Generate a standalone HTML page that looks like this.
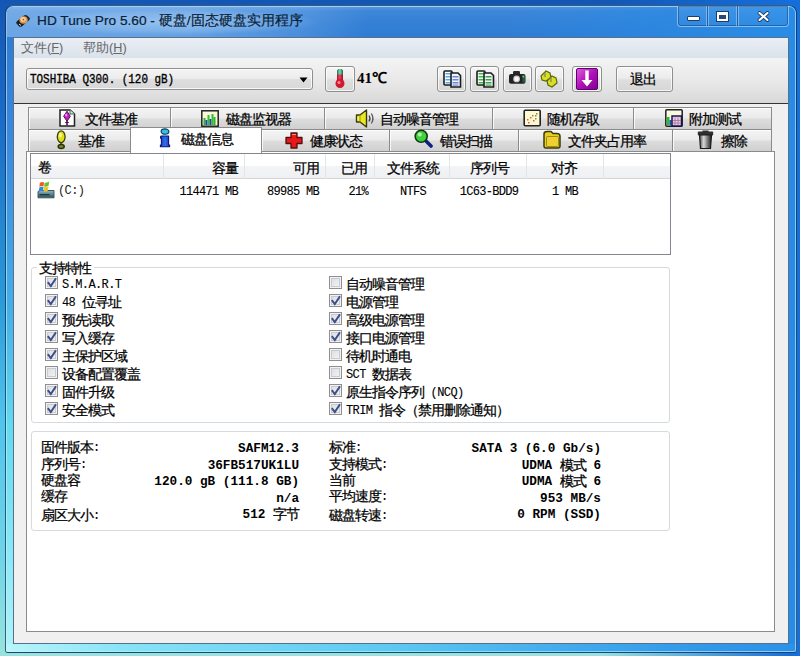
<!DOCTYPE html>
<html><head><meta charset="utf-8">
<style>
*{margin:0;padding:0;box-sizing:border-box}
html,body{width:800px;height:656px;overflow:hidden}
body{position:relative;font-family:"Liberation Sans",sans-serif;font-size:13px;color:#000;
background:linear-gradient(180deg,#1456b4 0px,#1a6cc8 120px,#2a9ad8 300px,#50c4ec 420px,#70d4e8 560px,#98e4dc 656px);}
.a{position:absolute}
.t{position:absolute;white-space:nowrap;line-height:1}
.c{position:absolute;white-space:nowrap;line-height:1;font-size:14px;letter-spacing:-1px;margin-top:1px;-webkit-text-stroke:.25px #000}
.cr{transform-origin:100% 0}
.m{position:absolute;white-space:nowrap;line-height:1;font-family:"Liberation Mono",monospace}
.btn{position:absolute;border:1px solid #8e8f8f;border-radius:3px;background:linear-gradient(180deg,#f6f6f6 0,#ececec 45%,#dedede 55%,#d6d6d6 100%);box-shadow:inset 0 0 0 1px rgba(255,255,255,.75)}
.tab{position:absolute;border:1px solid #8b8b8b;background:linear-gradient(180deg,#f4f4f4 0,#ebebeb 45%,#dcdcdc 55%,#d0d0d0 100%);box-shadow:inset 1px 1px 0 rgba(255,255,255,.8)}
.cb{position:absolute;width:13px;height:13px;border:1px solid #8f8f8f;background:linear-gradient(135deg,#d8dade 0,#f7f7f7 100%);box-shadow:inset 0 0 0 1px #f2f2f2,inset 0 0 0 2px #c6cad2}
.gb{position:absolute;border:1px solid #d5dadf;border-radius:3px;box-shadow:inset 1px 1px 0 #fff}
</style></head><body>
<div class="a" style="left:0;top:0;width:800px;height:656px;background:linear-gradient(90deg,rgba(0,0,0,0) 0,rgba(0,0,0,0) 600px,rgba(20,110,220,1) 790px)"></div>
<div class="a" style="left:5px;top:5px;width:792px;height:648px;border:1px solid rgba(8,36,72,.72);border-radius:8px 8px 3px 3px;background:linear-gradient(180deg,#5a9ae2 0,#3e86d8 5px,#3480d6 18px,#2e7cd4 31px,#3a8ae0 140px,#44aee8 300px,#62daf0 420px,#86e8f6 540px,#b0f4f8 648px);overflow:hidden"><div class="a" style="left:0;top:0;width:790px;height:646px;background:linear-gradient(90deg,rgba(60,150,230,0) 0,rgba(60,150,230,0) 500px,rgba(40,140,230,1) 770px)"></div><div class="a" style="left:0;top:638px;width:790px;height:8px;background:linear-gradient(90deg,#b8f6fa 0,#86e4f6 120px,#5ccaf2 380px,#40acee 560px,#3098ea 700px,#2c92e8 790px)"></div><div class="a" style="left:0;top:0;width:790px;height:646px;border:1px solid rgba(210,238,255,.6);border-radius:7px 7px 2px 2px"></div></div>
<div class="a" style="left:7px;top:7px;width:360px;height:30px;background:linear-gradient(90deg,rgba(180,215,250,.45) 0,rgba(180,215,250,.4) 180px,rgba(180,215,250,.2) 290px,rgba(180,215,250,0) 360px);border-radius:6px 0 0 0"></div><div class="a" style="left:20px;top:9px;width:300px;height:26px;background:radial-gradient(ellipse 150px 13px at 150px 13px,rgba(200,228,252,.45) 0,rgba(200,228,252,.2) 70%,rgba(200,228,252,0) 100%)"></div>
<svg class="a" style="left:15px;top:14px" width="16" height="14" viewBox="0 0 16 14">
 <path d="M1.5 9.5 Q0.5 8.5 2 7.2 L9 1.5 Q10.5 0.5 12 1.5 L14.5 3.8 Q15.5 5 14 6.3 L7 12.2 Q5.5 13.3 4 12.2 Z" fill="#1e1e1e"/>
 <ellipse cx="8.6" cy="6" rx="4.2" ry="3.8" fill="#d89850"/>
 <ellipse cx="8.2" cy="5.4" rx="2.6" ry="2.3" fill="#f4d0a0"/>
 <circle cx="8.4" cy="5.6" r="0.9" fill="#8a6030"/>
 <path d="M4 10 L6 11.5" stroke="#e8e0d0" stroke-width="1"/>
</svg>
<div class="t" style="left:37px;top:14px;font-size:13.7px;color:#0c1e36;-webkit-text-stroke:.2px #0c1e36">HD Tune Pro 5.60 - 硬盘/固态硬盘实用程序</div>
<div class="a" style="left:677px;top:6px;width:112px;height:21px;border:1px solid rgba(200,225,250,.55);border-top:none;border-radius:0 0 4px 4px;box-shadow:inset 0 0 0 1px rgba(20,50,100,.45);background:linear-gradient(180deg,rgba(120,180,240,.25),rgba(70,140,220,.2))"></div>
<div class="a" style="left:706px;top:6px;width:3px;height:20px;background:linear-gradient(90deg,rgba(200,225,250,.45) 0,rgba(200,225,250,.45) 33%,rgba(20,50,100,.5) 33%,rgba(20,50,100,.5) 66%,rgba(200,225,250,.45) 66%)"></div>
<div class="a" style="left:736px;top:6px;width:3px;height:20px;background:linear-gradient(90deg,rgba(200,225,250,.45) 0,rgba(200,225,250,.45) 33%,rgba(20,50,100,.5) 33%,rgba(20,50,100,.5) 66%,rgba(200,225,250,.45) 66%)"></div>
<div class="a" style="left:687px;top:16px;width:13px;height:5px;background:#fff;border:1px solid #203c68;border-radius:1px"></div>
<div class="a" style="left:717px;top:12px;width:11px;height:9px;border:2px solid #fff;border-top-width:3px;outline:1px solid #203c68;background:#28487a"></div>
<svg class="a" style="left:757px;top:11px" width="13" height="11" viewBox="0 0 13 11"><path d="M2.5 2 L10.5 9 M10.5 2 L2.5 9" stroke="#203c68" stroke-width="3.8" stroke-linecap="round"/><path d="M2.5 2 L10.5 9 M10.5 2 L2.5 9" stroke="#fff" stroke-width="2.1" stroke-linecap="round"/></svg>
<div class="a" style="left:13px;top:37px;width:776px;height:607px;border:1px solid #5b6f88;background:#f0f0f0"></div>
<div class="a" style="left:14px;top:38px;width:774px;height:20px;background:linear-gradient(180deg,#eaeff5 0,#e2e8f0 50%,#dae2eb 100%)"></div>
<div class="t" style="left:21px;top:42px;font-size:12.7px;color:#666">文件(<u>F</u>)</div>
<div class="t" style="left:83px;top:42px;font-size:12.7px;color:#666">帮助(<u>H</u>)</div>
<div class="a" style="left:14px;top:58px;width:774px;height:45px;background:linear-gradient(180deg,#f4f4f4 0,#e6e6e6 60%,#d8d8d8 100%)"></div>
<div class="a" style="left:14px;top:103px;width:774px;height:1px;background:#333"></div>
<div class="a" style="left:26px;top:68px;width:287px;height:22px;border:1px solid #8f8f8f;border-radius:3px;background:linear-gradient(180deg,#f4f4f4 0,#ececec 48%,#dedede 52%,#d8d8d8 100%);box-shadow:inset 0 0 0 1px rgba(255,255,255,.8)"></div>
<div class="m" style="left:30px;top:73px;font-size:13px;-webkit-text-stroke:.35px #000;transform:scaleX(0.84);transform-origin:0 0">TOSHIBA Q300. (120 gB)</div>
<svg class="a" style="left:299px;top:77px" width="9" height="6" viewBox="0 0 9 6"><path d="M0.5 0.5 H8.5 L4.5 5.5 Z" fill="#000"/></svg>
<div class="btn" style="left:325px;top:66px;width:30px;height:26px"></div>
<div class="btn" style="left:437px;top:66px;width:29px;height:26px"></div>
<div class="btn" style="left:470px;top:66px;width:29px;height:26px"></div>
<div class="btn" style="left:503px;top:66px;width:29px;height:26px"></div>
<div class="btn" style="left:535px;top:66px;width:29px;height:26px"></div>
<div class="btn" style="left:572px;top:66px;width:30px;height:26px"></div>
<div class="btn" style="left:616px;top:66px;width:57px;height:26px"></div>
<div class="t" style="left:357px;top:71px;font-size:15px;font-weight:bold;font-family:'Liberation Serif',serif">41℃</div>
<div class="c" style="left:630px;top:71px">退出</div>
<div class="tab" style="left:28px;top:107px;width:143px;height:23px"></div>
<div class="tab" style="left:170px;top:107px;width:155px;height:23px"></div>
<div class="tab" style="left:324px;top:107px;width:169px;height:23px"></div>
<div class="tab" style="left:492px;top:107px;width:142px;height:23px"></div>
<div class="tab" style="left:633px;top:107px;width:139px;height:23px"></div>
<div class="a" style="left:26px;top:151px;width:749px;height:481px;border:1px solid #8b8b8b;background:#fff"></div>
<div class="tab" style="left:28px;top:129px;width:103px;height:23px"></div>
<div class="tab" style="left:261px;top:129px;width:129px;height:23px"></div>
<div class="tab" style="left:389px;top:129px;width:130px;height:23px"></div>
<div class="tab" style="left:518px;top:129px;width:155px;height:23px"></div>
<div class="tab" style="left:672px;top:129px;width:100px;height:23px"></div>
<div class="a" style="left:130px;top:127px;width:132px;height:26px;border:1px solid #8b8b8b;border-bottom:none;background:#fff"></div>
<div class="c" style="left:85px;top:111px">文件基准</div>
<div class="c" style="left:226px;top:111px">磁盘监视器</div>
<div class="c" style="left:380px;top:111px">自动噪音管理</div>
<div class="c" style="left:547px;top:111px">随机存取</div>
<div class="c" style="left:689px;top:111px">附加测试</div>
<div class="c" style="left:78px;top:133px">基准</div>
<div class="c" style="left:181px;top:131px">磁盘信息</div>
<div class="c" style="left:310px;top:133px">健康状态</div>
<div class="c" style="left:440px;top:133px">错误扫描</div>
<div class="c" style="left:568px;top:133px">文件夹占用率</div>
<div class="c" style="left:721px;top:133px">擦除</div>
<div class="a" style="left:30px;top:153px;width:641px;height:102px;border:1px solid #828790;background:#fff"></div>
<div class="a" style="left:31px;top:154px;width:639px;height:25px;background:linear-gradient(180deg,#ffffff 0,#ffffff 50%,#f3f4f6 52%,#eef0f3 100%);border-bottom:1px solid #d5d5d5"></div>
<div class="a" style="left:163px;top:154px;width:1px;height:25px;background:#e3e5e8"></div>
<div class="a" style="left:244px;top:154px;width:1px;height:25px;background:#e3e5e8"></div>
<div class="a" style="left:325px;top:154px;width:1px;height:25px;background:#e3e5e8"></div>
<div class="a" style="left:374px;top:154px;width:1px;height:25px;background:#e3e5e8"></div>
<div class="a" style="left:449px;top:154px;width:1px;height:25px;background:#e3e5e8"></div>
<div class="a" style="left:526px;top:154px;width:1px;height:25px;background:#e3e5e8"></div>
<div class="a" style="left:603px;top:154px;width:1px;height:25px;background:#e3e5e8"></div>
<div class="c" style="left:38px;top:159px">卷</div>
<div class="c" style="right:562px;top:160px">容量</div>
<div class="c" style="right:481px;top:160px">可用</div>
<div class="c" style="right:433px;top:160px">已用</div>
<div class="c" style="left:413px;top:160px;transform:translateX(-50%)">文件系统</div>
<div class="c" style="left:489px;top:160px;transform:translateX(-50%)">序列号</div>
<div class="c" style="left:564px;top:160px;transform:translateX(-50%)">对齐</div>
<div class="m" style="left:58px;top:185px;font-size:12px;letter-spacing:-0.6px;color:#222">(C:)</div>
<div class="m" style="right:562px;top:186px;font-size:12px;letter-spacing:-0.7px;-webkit-text-stroke:.1px #000">114471&#160;MB</div>
<div class="m" style="right:481px;top:186px;font-size:12px;letter-spacing:-0.7px;-webkit-text-stroke:.1px #000">89985&#160;MB</div>
<div class="m" style="right:432px;top:186px;font-size:12px;letter-spacing:-0.7px;-webkit-text-stroke:.1px #000">21%</div>
<div class="m" style="left:413px;top:186px;font-size:12px;letter-spacing:-0.7px;transform:translateX(-50%);-webkit-text-stroke:.1px #000">NTFS</div>
<div class="m" style="left:489px;top:186px;font-size:12px;letter-spacing:-0.7px;transform:translateX(-50%);-webkit-text-stroke:.1px #000">1C63-BDD9</div>
<div class="m" style="left:565px;top:186px;font-size:12px;letter-spacing:-0.7px;transform:translateX(-50%);-webkit-text-stroke:.1px #000">1&#160;MB</div>
<div class="gb" style="left:31px;top:267px;width:639px;height:156px"></div>
<div class="a" style="left:37px;top:260px;width:57px;height:14px;background:#fff"></div>
<div class="c" style="left:39px;top:260px">支持特性</div>
<div class="cb" style="left:45px;top:276px"><svg class="a" style="left:0;top:0" width="11" height="11" viewBox="0 0 11 11"><path d="M1.8 5.2 L4.8 9 L10 1.3" fill="none" stroke="#3f4e88" stroke-width="2"/></svg></div>
<div class="c" style="left:62px;top:276px"><span style="font-family:'Liberation Mono',monospace;font-size:12px;letter-spacing:-0.6px;position:relative;top:-1px;-webkit-text-stroke:.1px #000">S.M.A.R.T</span></div>
<div class="cb" style="left:329px;top:276px"></div>
<div class="c" style="left:346px;top:276px">自动噪音管理</div>
<div class="cb" style="left:45px;top:294px"><svg class="a" style="left:0;top:0" width="11" height="11" viewBox="0 0 11 11"><path d="M1.8 5.2 L4.8 9 L10 1.3" fill="none" stroke="#3f4e88" stroke-width="2"/></svg></div>
<div class="c" style="left:62px;top:294px"><span style="font-family:'Liberation Mono',monospace;font-size:12px;letter-spacing:-0.6px;position:relative;top:-1px;-webkit-text-stroke:.1px #000">48&#160;</span>位寻址</div>
<div class="cb" style="left:329px;top:294px"><svg class="a" style="left:0;top:0" width="11" height="11" viewBox="0 0 11 11"><path d="M1.8 5.2 L4.8 9 L10 1.3" fill="none" stroke="#3f4e88" stroke-width="2"/></svg></div>
<div class="c" style="left:346px;top:294px">电源管理</div>
<div class="cb" style="left:45px;top:312px"><svg class="a" style="left:0;top:0" width="11" height="11" viewBox="0 0 11 11"><path d="M1.8 5.2 L4.8 9 L10 1.3" fill="none" stroke="#3f4e88" stroke-width="2"/></svg></div>
<div class="c" style="left:62px;top:312px">预先读取</div>
<div class="cb" style="left:329px;top:312px"><svg class="a" style="left:0;top:0" width="11" height="11" viewBox="0 0 11 11"><path d="M1.8 5.2 L4.8 9 L10 1.3" fill="none" stroke="#3f4e88" stroke-width="2"/></svg></div>
<div class="c" style="left:346px;top:312px">高级电源管理</div>
<div class="cb" style="left:45px;top:330px"><svg class="a" style="left:0;top:0" width="11" height="11" viewBox="0 0 11 11"><path d="M1.8 5.2 L4.8 9 L10 1.3" fill="none" stroke="#3f4e88" stroke-width="2"/></svg></div>
<div class="c" style="left:62px;top:330px">写入缓存</div>
<div class="cb" style="left:329px;top:330px"><svg class="a" style="left:0;top:0" width="11" height="11" viewBox="0 0 11 11"><path d="M1.8 5.2 L4.8 9 L10 1.3" fill="none" stroke="#3f4e88" stroke-width="2"/></svg></div>
<div class="c" style="left:346px;top:330px">接口电源管理</div>
<div class="cb" style="left:45px;top:348px"><svg class="a" style="left:0;top:0" width="11" height="11" viewBox="0 0 11 11"><path d="M1.8 5.2 L4.8 9 L10 1.3" fill="none" stroke="#3f4e88" stroke-width="2"/></svg></div>
<div class="c" style="left:62px;top:348px">主保护区域</div>
<div class="cb" style="left:329px;top:348px"></div>
<div class="c" style="left:346px;top:348px">待机时通电</div>
<div class="cb" style="left:45px;top:366px"></div>
<div class="c" style="left:62px;top:366px">设备配置覆盖</div>
<div class="cb" style="left:329px;top:366px"></div>
<div class="c" style="left:346px;top:366px"><span style="font-family:'Liberation Mono',monospace;font-size:12px;letter-spacing:-0.6px;position:relative;top:-1px;-webkit-text-stroke:.1px #000">SCT&#160;</span>数据表</div>
<div class="cb" style="left:45px;top:384px"><svg class="a" style="left:0;top:0" width="11" height="11" viewBox="0 0 11 11"><path d="M1.8 5.2 L4.8 9 L10 1.3" fill="none" stroke="#3f4e88" stroke-width="2"/></svg></div>
<div class="c" style="left:62px;top:384px">固件升级</div>
<div class="cb" style="left:329px;top:384px"><svg class="a" style="left:0;top:0" width="11" height="11" viewBox="0 0 11 11"><path d="M1.8 5.2 L4.8 9 L10 1.3" fill="none" stroke="#3f4e88" stroke-width="2"/></svg></div>
<div class="c" style="left:346px;top:384px">原生指令序列<span style="font-family:'Liberation Mono',monospace;font-size:12px;letter-spacing:-0.6px;position:relative;top:-1px;-webkit-text-stroke:.1px #000">&#160;(NCQ)</span></div>
<div class="cb" style="left:45px;top:402px"><svg class="a" style="left:0;top:0" width="11" height="11" viewBox="0 0 11 11"><path d="M1.8 5.2 L4.8 9 L10 1.3" fill="none" stroke="#3f4e88" stroke-width="2"/></svg></div>
<div class="c" style="left:62px;top:402px">安全模式</div>
<div class="cb" style="left:329px;top:402px"><svg class="a" style="left:0;top:0" width="11" height="11" viewBox="0 0 11 11"><path d="M1.8 5.2 L4.8 9 L10 1.3" fill="none" stroke="#3f4e88" stroke-width="2"/></svg></div>
<div class="c" style="left:346px;top:402px"><span style="font-family:'Liberation Mono',monospace;font-size:12px;letter-spacing:-0.6px;position:relative;top:-1px;-webkit-text-stroke:.1px #000">TRIM&#160;</span>指令（禁用删除通知）</div>
<div class="gb" style="left:31px;top:431px;width:639px;height:100px"></div>
<div class="c" style="left:41px;top:439px">固件版本<span style="font-family:'Liberation Mono',monospace;font-size:12px;letter-spacing:-0.6px;position:relative;top:-1px;-webkit-text-stroke:.1px #000">:</span></div>
<div class="c" style="left:41px;top:456px">序列号<span style="font-family:'Liberation Mono',monospace;font-size:12px;letter-spacing:-0.6px;position:relative;top:-1px;-webkit-text-stroke:.1px #000">:</span></div>
<div class="c" style="left:41px;top:472px">硬盘容</div>
<div class="c" style="left:41px;top:488px">缓存</div>
<div class="c" style="left:41px;top:507px">扇区大小<span style="font-family:'Liberation Mono',monospace;font-size:12px;letter-spacing:-0.6px;position:relative;top:-1px;-webkit-text-stroke:.1px #000">:</span></div>
<div class="c" style="left:329px;top:439px">标准<span style="font-family:'Liberation Mono',monospace;font-size:12px;letter-spacing:-0.6px;position:relative;top:-1px;-webkit-text-stroke:.1px #000">:</span></div>
<div class="c" style="left:329px;top:456px">支持模式<span style="font-family:'Liberation Mono',monospace;font-size:12px;letter-spacing:-0.6px;position:relative;top:-1px;-webkit-text-stroke:.1px #000">:</span></div>
<div class="c" style="left:329px;top:472px">当前</div>
<div class="c" style="left:329px;top:488px">平均速度<span style="font-family:'Liberation Mono',monospace;font-size:12px;letter-spacing:-0.6px;position:relative;top:-1px;-webkit-text-stroke:.1px #000">:</span></div>
<div class="c" style="left:329px;top:507px">磁盘转速<span style="font-family:'Liberation Mono',monospace;font-size:12px;letter-spacing:-0.6px;position:relative;top:-1px;-webkit-text-stroke:.1px #000">:</span></div>
<div class="c" style="right:501px;top:440px;-webkit-text-stroke:.3px #000"><span style="font-family:'Liberation Mono',monospace;font-size:12.7px;letter-spacing:0px;font-weight:bold;position:relative;top:-1px;-webkit-text-stroke:0px #000">SAFM12.3</span></div>
<div class="c" style="right:501px;top:457px;-webkit-text-stroke:.3px #000"><span style="font-family:'Liberation Mono',monospace;font-size:12.7px;letter-spacing:0px;font-weight:bold;position:relative;top:-1px;-webkit-text-stroke:0px #000">36FB517UK1LU</span></div>
<div class="c" style="right:501px;top:473px;-webkit-text-stroke:.3px #000"><span style="font-family:'Liberation Mono',monospace;font-size:12.7px;letter-spacing:0px;font-weight:bold;position:relative;top:-1px;-webkit-text-stroke:0px #000">120.0&#160;gB&#160;(111.8&#160;GB)</span></div>
<div class="c" style="right:501px;top:490px;-webkit-text-stroke:.3px #000"><span style="font-family:'Liberation Mono',monospace;font-size:12.7px;letter-spacing:0px;font-weight:bold;position:relative;top:-1px;-webkit-text-stroke:0px #000">n/a</span></div>
<div class="c" style="right:501px;top:506px;-webkit-text-stroke:.3px #000"><span style="font-family:'Liberation Mono',monospace;font-size:12.7px;letter-spacing:0px;font-weight:bold;position:relative;top:-1px;-webkit-text-stroke:0px #000">512&#160;</span>字节</div>
<div class="c" style="right:199px;top:440px;-webkit-text-stroke:.3px #000"><span style="font-family:'Liberation Mono',monospace;font-size:12.7px;letter-spacing:0px;font-weight:bold;position:relative;top:-1px;-webkit-text-stroke:0px #000">SATA&#160;3&#160;(6.0&#160;Gb/s)</span></div>
<div class="c" style="right:199px;top:457px;-webkit-text-stroke:.3px #000"><span style="font-family:'Liberation Mono',monospace;font-size:12.7px;letter-spacing:0px;font-weight:bold;position:relative;top:-1px;-webkit-text-stroke:0px #000">UDMA&#160;</span>模式<span style="font-family:'Liberation Mono',monospace;font-size:12.7px;letter-spacing:0px;font-weight:bold;position:relative;top:-1px;-webkit-text-stroke:0px #000">&#160;6</span></div>
<div class="c" style="right:199px;top:473px;-webkit-text-stroke:.3px #000"><span style="font-family:'Liberation Mono',monospace;font-size:12.7px;letter-spacing:0px;font-weight:bold;position:relative;top:-1px;-webkit-text-stroke:0px #000">UDMA&#160;</span>模式<span style="font-family:'Liberation Mono',monospace;font-size:12.7px;letter-spacing:0px;font-weight:bold;position:relative;top:-1px;-webkit-text-stroke:0px #000">&#160;6</span></div>
<div class="c" style="right:199px;top:490px;-webkit-text-stroke:.3px #000"><span style="font-family:'Liberation Mono',monospace;font-size:12.7px;letter-spacing:0px;font-weight:bold;position:relative;top:-1px;-webkit-text-stroke:0px #000">953&#160;MB/s</span></div>
<div class="c" style="right:199px;top:506px;-webkit-text-stroke:.3px #000"><span style="font-family:'Liberation Mono',monospace;font-size:12.7px;letter-spacing:0px;font-weight:bold;position:relative;top:-1px;-webkit-text-stroke:0px #000">0&#160;RPM&#160;(SSD)</span></div>
<svg class="a" style="left:334px;top:68px" width="12" height="22" viewBox="0 0 12 22">
<defs><linearGradient id="thr" x1="0" x2="1"><stop offset="0" stop-color="#b0102a"/><stop offset=".45" stop-color="#f04060"/><stop offset="1" stop-color="#a00820"/></linearGradient>
<linearGradient id="thg" x1="0" x2="1"><stop offset="0" stop-color="#1a7a60"/><stop offset=".5" stop-color="#70e0b0"/><stop offset="1" stop-color="#106048"/></linearGradient></defs>
<rect x="3" y="1" width="6" height="14" rx="3" fill="url(#thr)"/>
<path d="M3 4 A3 3 0 0 1 9 4 V6.5 H3 Z" fill="url(#thg)"/>
<circle cx="6" cy="15.5" r="4.5" fill="#d01830"/>
<circle cx="5" cy="14.5" r="1.5" fill="#ff8090"/>
</svg>
<svg class="a" style="left:443px;top:70px" width="19" height="18" viewBox="0 0 19 18">
<rect x="1" y="1" width="8" height="14" rx="1" fill="#fff" stroke="#1c1c1c" stroke-width="1.6"/>
<rect x="2.5" y="3" width="5" height="1.5" fill="#58a8e8"/><rect x="2.5" y="6" width="5" height="1.5" fill="#58a8e8"/><rect x="2.5" y="9" width="5" height="1.5" fill="#58a8e8"/><rect x="2.5" y="12" width="5" height="1.5" fill="#58a8e8"/>
<path d="M8 3 H15 L17.5 5.5 V17 H8 Z" fill="#eef4ff" stroke="#1c1c1c" stroke-width="1.6"/>
<rect x="9.5" y="6" width="6" height="1.5" fill="#6a8ad8"/><rect x="9.5" y="9" width="6" height="1.5" fill="#6a8ad8"/><rect x="9.5" y="12" width="6" height="1.5" fill="#6a8ad8"/><rect x="9.5" y="14.5" width="6" height="1.2" fill="#6a8ad8"/>
</svg>
<svg class="a" style="left:476px;top:70px" width="19" height="18" viewBox="0 0 19 18">
<rect x="1" y="1" width="8" height="14" rx="1" fill="#fff" stroke="#1c1c1c" stroke-width="1.6"/>
<rect x="2.5" y="3" width="5" height="1.5" fill="#30c040"/><rect x="2.5" y="6" width="5" height="1.5" fill="#30c040"/><rect x="2.5" y="9" width="5" height="1.5" fill="#30c040"/><rect x="2.5" y="12" width="5" height="1.5" fill="#30c040"/>
<path d="M8 3 H15 L17.5 5.5 V17 H8 Z" fill="#eef4ff" stroke="#1c1c1c" stroke-width="1.6"/>
<rect x="9.5" y="6" width="6" height="1.5" fill="#40a040"/><rect x="9.5" y="9" width="6" height="1.5" fill="#40a040"/><rect x="9.5" y="12" width="6" height="1.5" fill="#40a040"/><rect x="9.5" y="14.5" width="6" height="1.2" fill="#40a040"/>
</svg>
<svg class="a" style="left:508px;top:70px" width="19" height="15" viewBox="0 0 19 15">
<rect x="5" y="1" width="7" height="4" rx="1.2" fill="#2a2a2a"/>
<rect x="1" y="4" width="16.5" height="9.8" rx="2" fill="#232323"/>
<circle cx="8.6" cy="8.9" r="3.4" fill="#c8c8c8"/>
<circle cx="8.6" cy="8.9" r="2.2" fill="#fafafa"/>
<path d="M14.5 5.2 H17 V12.5 H14.5 Z" fill="#2a5a3a"/>
<circle cx="15.3" cy="6.6" r="1.1" fill="#50c070"/>
</svg>
<svg class="a" style="left:539px;top:70px" width="20" height="18" viewBox="0 0 20 18">
<g stroke="#5a6a10" stroke-width="1.2">
<path d="M2 6 L7 1 L11 3 L12 8 L7 11 L3 10 Z" fill="#d8e020"/>
<path d="M8 11 L13 6 L17 8 L18 13 L13 17 L9 15 Z" fill="#d8e020"/>
</g>
<path d="M6 2.5 L6 7" stroke="#8a8a70" stroke-width="1.4"/>
<path d="M12 7.5 L12 12" stroke="#8a8a70" stroke-width="1.4"/>
</svg>
<svg class="a" style="left:576px;top:68px" width="22" height="22" viewBox="0 0 22 22">
<defs><linearGradient id="pg" x1="0" y1="0" x2="1" y2="1"><stop offset="0" stop-color="#e060e0"/><stop offset=".5" stop-color="#b010b8"/><stop offset="1" stop-color="#800090"/></linearGradient></defs>
<rect x="0.5" y="0.5" width="21" height="21" rx="1.5" fill="url(#pg)" stroke="#600070" stroke-width="1"/>
<path d="M9.3 2.5 H12.7 V12 H16.5 L11 18.5 L5.5 12 H9.3 Z" fill="#fff"/>
</svg>
<svg class="a" style="left:59px;top:109px" width="17" height="18" viewBox="0 0 17 18">
<path d="M1 1 H11 L15.5 5 V17 H1 Z" fill="#fff" stroke="#222" stroke-width="1.5"/>
<path d="M11 1 V5 H15.5" fill="#d8f0e0" stroke="#2a6a4a" stroke-width="1"/>
<path d="M8 2.2 L11.3 7.3 L8 12.2 L4.7 7.3 Z" fill="#c020c0" stroke="#5a105a" stroke-width="1" stroke-linejoin="round"/>
<ellipse cx="7.2" cy="6" rx="1.1" ry="1.6" fill="#f090f0"/>
<path d="M8 12 V16.5" stroke="#501050" stroke-width="1.6"/>
<path d="M6.2 13.5 H9.8" stroke="#501050" stroke-width="1"/>
</svg>
<svg class="a" style="left:201px;top:110px" width="18" height="17" viewBox="0 0 18 17">
<rect x="0.8" y="0.8" width="16.4" height="15.4" fill="#f8f8d8" stroke="#222" stroke-width="1.5"/>
<rect x="2.5" y="8" width="2" height="7" fill="#30b030"/><rect x="4.5" y="10" width="2" height="5" fill="#2040c0"/>
<rect x="6.5" y="5" width="2" height="10" fill="#30c030"/><rect x="8.5" y="9" width="2" height="6" fill="#2040c0"/>
<rect x="10.5" y="4" width="2" height="11" fill="#30c030"/><rect x="12.5" y="7" width="2" height="8" fill="#30b030"/>
</svg>
<svg class="a" style="left:355px;top:109px" width="21" height="19" viewBox="0 0 21 19">
<path d="M1.5 6 H5 L11.5 1 V18 L5 13 H1.5 Z" fill="#e8e820" stroke="#3a3a10" stroke-width="1.4" stroke-linejoin="round"/>
<path d="M5 6.2 V12.8" stroke="#9a9a20" stroke-width="1"/>
<path d="M3 7.5 V11.5" stroke="#f8f8a0" stroke-width="1"/>
<path d="M14 6.5 Q16 9.5 14 12.5" fill="none" stroke="#444" stroke-width="1.3"/>
<path d="M16.3 4.5 Q19.6 9.5 16.3 14.5" fill="none" stroke="#555" stroke-width="1.3"/>
</svg>
<svg class="a" style="left:523px;top:109px" width="19" height="18" viewBox="0 0 19 18">
<rect x="1.2" y="1.2" width="16" height="15.5" rx="1" fill="#fff8d0" stroke="#222" stroke-width="1.6"/>
<g fill="#d06040"><rect x="4" y="10" width="1.5" height="1.5"/><rect x="7" y="8" width="1.5" height="1.5"/><rect x="10" y="11" width="1.5" height="1.5"/><rect x="12" y="6" width="1.5" height="1.5"/><rect x="5" y="13" width="1.5" height="1.5"/></g>
<g fill="#60a060"><rect x="9" y="6" width="1.5" height="1.5"/><rect x="13" y="4" width="1.5" height="1.5"/><rect x="12" y="9" width="1.5" height="1.5"/></g>
</svg>
<svg class="a" style="left:665px;top:109px" width="18" height="18" viewBox="0 0 18 18">
<rect x="0.8" y="0.8" width="16.4" height="16.4" rx="1" fill="#fafae0" stroke="#222" stroke-width="1.5"/>
<rect x="2" y="8" width="2.5" height="8.5" fill="#20c030"/><rect x="4.5" y="11" width="2" height="5.5" fill="#2050c0"/>
<rect x="7" y="7" width="9.5" height="10" fill="#f0c8e0" stroke="#101850" stroke-width="1.5"/>
<path d="M10 8.5 V16 M13 8.5 V16 M8 11.5 H16 M8 14 H16" stroke="#a070a0" stroke-width=".8"/>
</svg>
<svg class="a" style="left:56px;top:130px" width="11" height="20" viewBox="0 0 11 20">
<ellipse cx="5.2" cy="6.8" rx="3.9" ry="5.9" fill="#e0e020" stroke="#3a4208" stroke-width="1.3"/>
<ellipse cx="4.4" cy="5" rx="1.4" ry="2.3" fill="#f8f890"/>
<path d="M3.6 12.5 L5.2 13.8 L6.8 12.5" fill="none" stroke="#3a4208" stroke-width="1"/>
<ellipse cx="5.2" cy="16.6" rx="3" ry="2" fill="#808a30" stroke="#2a3208" stroke-width="1.5"/>
</svg>
<svg class="a" style="left:159px;top:128px" width="12" height="20" viewBox="0 0 12 20">
<defs><linearGradient id="ig" x1="0" x2="1"><stop offset="0" stop-color="#1838b8"/><stop offset=".5" stop-color="#3070f0"/><stop offset="1" stop-color="#1838b8"/></linearGradient></defs>
<ellipse cx="6" cy="3.6" rx="3.9" ry="2.7" fill="#30c0e0" stroke="#0a3a60" stroke-width="1.1"/>
<path d="M2.2 8 H9.6 V17 H10.6 V18.8 H1.4 V17 H2.4 V10.2 H1.6 V8.6 Z" fill="url(#ig)" stroke="#0a1470" stroke-width="1.1" stroke-linejoin="round"/>
</svg>
<svg class="a" style="left:285px;top:132px" width="18" height="17" viewBox="0 0 18 17">
<path d="M6 1 H12 V5.5 H17 V11.5 H12 V16 H6 V11.5 H1 V5.5 H6 Z" fill="#e81818" stroke="#501010" stroke-width="1.3" stroke-linejoin="round"/>
<path d="M7 2.5 H11" stroke="#ff9090" stroke-width="1"/>
</svg>
<svg class="a" style="left:414px;top:129px" width="19" height="19" viewBox="0 0 19 19">
<path d="M10 10 L17 17" stroke="#102080" stroke-width="3.6" stroke-linecap="round"/>
<circle cx="7.2" cy="7.2" r="6" fill="#40d040" stroke="#103810" stroke-width="1.6"/>
<circle cx="5.8" cy="5.6" r="2" fill="#b0f0a0"/>
</svg>
<svg class="a" style="left:543px;top:130px" width="18" height="19" viewBox="0 0 18 19">
<path d="M1 4 Q1 1.5 4 1.5 H8 L10 3.5 H14 Q17 3.5 17 6.5 V16 Q17 18 15 18 H3 Q1 18 1 16 Z" fill="#e8d020" stroke="#3a3a10" stroke-width="1.5"/>
<rect x="3.5" y="6.5" width="12" height="10" rx="1" fill="#f0d030" stroke="#8a7a10" stroke-width=".8"/>
</svg>
<svg class="a" style="left:697px;top:130px" width="17" height="20" viewBox="0 0 17 20">
<defs><linearGradient id="tg" x1="0" x2="1"><stop offset="0" stop-color="#505050"/><stop offset=".35" stop-color="#d8d8d8"/><stop offset=".7" stop-color="#707070"/><stop offset="1" stop-color="#202020"/></linearGradient></defs>
<rect x="0.8" y="1.5" width="15.4" height="4" rx="1" fill="#303030"/>
<rect x="5.5" y="0.5" width="6" height="2" fill="#303030"/>
<path d="M2.5 5 H14.5 L13.5 18.5 H3.5 Z" fill="url(#tg)" stroke="#1a1a1a" stroke-width="1.2"/>
</svg>
<svg class="a" style="left:37px;top:180px" width="18" height="19" viewBox="0 0 18 19">
<defs><linearGradient id="dg" x1="0" y1="0" x2="0" y2="1"><stop offset="0" stop-color="#90b8c0"/><stop offset="1" stop-color="#2a5058"/></linearGradient></defs>
<path d="M1 11.5 L3 10.5 H17 V17.8 H1 Z" fill="url(#dg)" stroke="#3a5a60" stroke-width="1"/>
<rect x="2.5" y="14" width="10" height="1.4" fill="#1a3a40"/>
<path d="M2.8 2.8 Q5 1.6 7 2.4 L6.6 6.4 Q4.6 5.6 2.4 6.8 Z" fill="#f05a20"/>
<path d="M7.6 2.5 Q9.8 3.2 12.2 1.6 L11.6 5.8 Q9.4 7.2 7.2 6.5 Z" fill="#6ac030"/>
<path d="M2.3 7.4 Q4.5 6.2 6.5 7 L6 11 Q4 10.2 1.8 11.4 Z" fill="#2a8ae0"/>
<path d="M7.1 7.1 Q9.3 7.8 11.5 6.4 L11 10.6 Q8.8 12 6.6 11.2 Z" fill="#f8c020"/>
</svg>
</body></html>
